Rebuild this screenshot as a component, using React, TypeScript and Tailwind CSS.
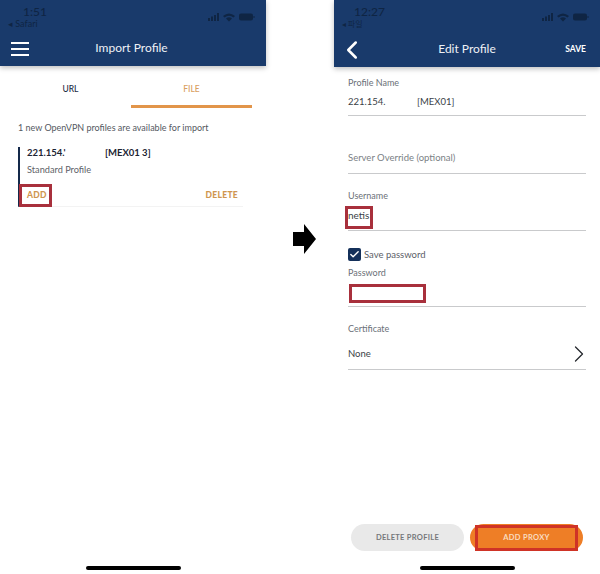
import { ChevronLeft, ChevronRight, Check } from "lucide-react";

const navy = "bg-[#193a6b]";

const StatusIcons = () => (
    <svg width="47" height="10" viewBox="0 0 47 10" className="shrink-0">
        <rect x="0" y="6" width="2" height="3" fill="#0f2544" />
        <rect x="3" y="4.5" width="2" height="4.5" fill="#0f2544" />
        <rect x="6" y="3" width="2" height="6" fill="#0f2544" />
        <rect x="9" y="1" width="2" height="8" fill="#0f2544" />
        <path d="M15 4 Q21 -1 27 4 L25.5 5.5 Q21 2 16.5 5.5 Z M18 6.5 Q21 4 24 6.5 L21 9.5 Z" fill="#0f2544" />
        <rect x="31" y="1.5" width="14" height="7" rx="2" fill="#0f2544" />
        <rect x="45.5" y="4" width="1" height="2" fill="#0f2544" />
    </svg>
);

const Label = ({ text }: { text: string }) => (
    <span className="block text-[9px] leading-3 text-[#6b7078]">{text}</span>
);

const RedBox = ({ className }: { className: string }) => (
    <div className={`absolute border-[3px] border-[#a8303c] ${className}`} />
);

const HomeBar = () => <div className="w-[95px] h-[4px] rounded-full bg-black" />;

const ImportProfile = () => (
    <div className="w-[266px] h-full flex flex-col">
        <header className={`${navy} h-[66px] shrink-0 shadow-[0_2px_5px_rgba(0,0,0,0.25)] flex flex-col z-10`}>
            <div className="h-[33px] pl-[8px] pr-[11px] pt-[5px] flex justify-between">
                <div className="flex flex-col">
                    <span className="pl-[15px] text-[12px] leading-[13px] font-medium text-[#0f2544]">1:51</span>
                    <span className="text-[9px] leading-[11px] text-[#0f2544]">◂ Safari</span>
                </div>
                <div className="pt-[7px]">
                    <StatusIcons />
                </div>
            </div>
            <div className="relative flex-1 flex items-center justify-center pb-[3px] pr-[3px]">
                <div className="absolute left-[11px] top-[9px] w-[18px] flex flex-col gap-[4px]">
                    <div className="h-[2px] bg-white" />
                    <div className="h-[2px] bg-white" />
                    <div className="h-[2px] bg-white" />
                </div>
                <span className="text-[12px] text-[#eef1f6]">Import Profile</span>
            </div>
        </header>

        <div className="flex pl-[10px] pr-[14px] mt-[17px]">
            <div className="w-[121px] h-[25px] flex justify-center">
                <span className="text-[8.5px] leading-3 font-medium text-[#1d2c45]">URL</span>
            </div>
            <div className="w-[121px] h-[25px] flex justify-center border-b-[3px] border-[#e2954a]">
                <span className="text-[8.5px] leading-3 font-medium text-[#d9a062]">FILE</span>
            </div>
        </div>

        <p className="ml-[18px] mt-[14px] text-[9px] leading-3 text-[#55595f]">1 new OpenVPN profiles are available for import</p>

        <div className="relative ml-[18px] mr-[23px] mt-[13px] h-[60px] border-l-2 border-[#14294a] border-b border-b-[#f3f3f3] pl-[7px] flex flex-col">
            <div className="flex text-[9.5px] leading-3 font-bold text-[#1c2433]">
                <span className="w-[78px]">221.154.'</span>
                <span>[MEX01 3]</span>
            </div>
            <span className="mt-[5px] text-[9.2px] leading-3 text-[#5e6268]">Standard Profile</span>
            <div className="mt-[13px] pr-[5px] flex justify-between text-[8.5px] leading-3 font-black tracking-[0.3px] text-[#cf9650]">
                <span>ADD</span>
                <span>DELETE</span>
            </div>
            <RedBox className="left-[-1px] top-[37px] w-[33px] h-[23px]" />
        </div>

        <div className="mt-auto mb-[4px] flex justify-center">
            <HomeBar />
        </div>
    </div>
);

const EditProfile = () => (
    <div className="w-[266px] h-full flex flex-col">
        <header className={`${navy} h-[67px] shrink-0 shadow-[0_2px_5px_rgba(0,0,0,0.25)] flex flex-col z-10`}>
            <div className="h-[33px] pl-[8px] pr-[11px] pt-[5px] flex justify-between">
                <div className="flex flex-col">
                    <span className="pl-[12px] text-[12px] leading-[13px] font-medium text-[#0f2544]">12:27</span>
                    <span className="text-[8px] leading-[11px] text-[#0f2544]" style={{ fontFamily: '"Noto Sans CJK KR", sans-serif' }}>◂ 파일</span>
                </div>
                <div className="pt-[7px]">
                    <StatusIcons />
                </div>
            </div>
            <div className="relative flex-1 flex items-center justify-center pb-[2px]">
                <ChevronLeft className="absolute left-[3px] top-[2px] text-white" size={30} strokeWidth={2} />
                <span className="text-[12px] text-[#eef1f6]">Edit Profile</span>
                <span className="absolute right-[14px] top-[10px] text-[8.5px] leading-3 font-bold text-white">SAVE</span>
            </div>
        </header>

        <div className="relative flex-1 flex flex-col px-[14px] pt-[10px]">
            <Label text="Profile Name" />
            <div className="mt-[7px] h-[20px] flex border-b border-[#c9cacc] text-[9.5px] leading-3 text-[#3a3f47]">
                <span className="w-[69px]">221.154.</span>
                <span>[MEX01]</span>
            </div>

            <div className="mt-[36px] h-[22px] border-b border-[#c9cacc] text-[9.5px] leading-3 text-[#7b7f85]">Server Override (optional)</div>

            <div className="mt-[16px]">
                <Label text="Username" />
            </div>
            <div className="mt-[7px] h-[22px] border-b border-[#c9cacc] text-[10px] leading-3 text-[#3a3f47]">netis</div>

            <div className="mt-[17px] flex items-center gap-[3px]">
                <div className="w-[13px] h-[13px] rounded-[2px] bg-[#14305a] flex items-center justify-center">
                    <Check className="text-white" size={11} strokeWidth={3} />
                </div>
                <span className="text-[9.5px] leading-3 text-[#5c6067]">Save password</span>
            </div>

            <div className="mt-[6px]">
                <Label text="Password" />
            </div>
            <div className="h-[28px] border-b border-[#c9cacc]" />

            <div className="mt-[16px]">
                <Label text="Certificate" />
            </div>
            <div className="relative mt-[13px] h-[22px] border-b border-[#c9cacc] text-[9.5px] leading-3 text-[#3a3f47]">
                <span>None</span>
                <ChevronRight className="absolute right-[-7px] top-[-8px] text-[#26292e]" size={28} strokeWidth={1.1} />
            </div>

            <div className="mt-auto mb-[15px] ml-[3px] flex gap-[6px]">
                <div className="w-[113px] h-[27px] rounded-full bg-[#e9e9e9] flex items-center justify-center text-[7.5px] font-bold tracking-[0.3px] text-[#75777a]">DELETE PROFILE</div>
                <div className="relative w-[113px] h-[27px] rounded-full bg-[#ee7e26] flex items-center justify-center text-[7.5px] font-bold tracking-[0.3px] text-[#f9dcc0]">
                    ADD PROXY
                    <RedBox className="left-[5px] top-[1px] w-[103px] h-[26px] border-[#cf3326]" />
                </div>
            </div>
            <div className="mb-[4px] flex justify-center">
                <HomeBar />
            </div>

            <RedBox className="left-[11px] top-[139px] w-[28px] h-[23px]" />
            <RedBox className="left-[15px] top-[217px] w-[77px] h-[19px]" />
        </div>
    </div>
);

const App = () => {
    return (
        <div className="w-[600px] h-[574px] flex bg-white overflow-hidden" style={{ fontFamily: "Lato, sans-serif" }}>
            <ImportProfile />
            <div className="w-[68px] h-full pl-[27px] pt-[224px]">
                <svg width="24" height="30" viewBox="0 0 24 30">
                    <path d="M0 8 H11 V0 L23 15 L11 30 V22 H0 Z" fill="#000" />
                </svg>
            </div>
            <EditProfile />
        </div>
    );
};

export default App;
